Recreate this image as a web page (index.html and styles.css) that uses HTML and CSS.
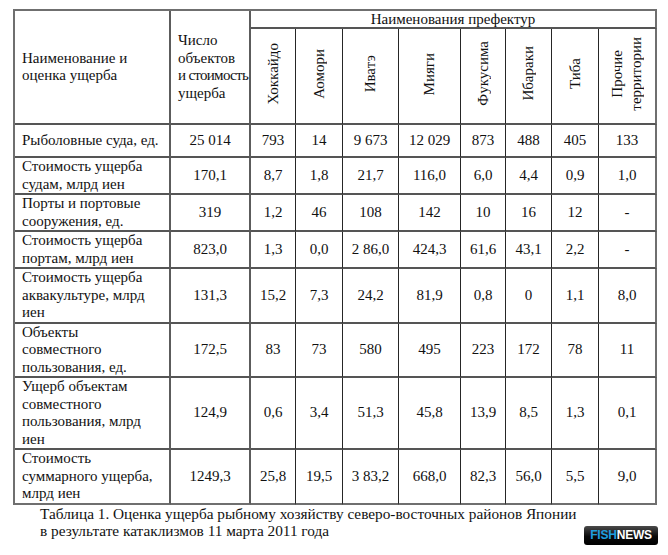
FILE: index.html
```html
<!DOCTYPE html>
<html lang="ru">
<head>
<meta charset="utf-8">
<link rel="stylesheet" href="styles.css">
</head>
<body>
<div class="page">
<table class="dmg">
<colgroup>
<col class="c1"><col class="c2"><col class="c3"><col class="c4"><col class="c5"><col class="c6"><col class="c7"><col class="c8"><col class="c9"><col class="c10">
</colgroup>
<thead>
<tr class="h-top">
<th rowspan="2" class="name thick">Наименование и<br>оценка ущерба</th>
<th rowspan="2" class="name thick">Число<br>объектов<br><span class="tight">и стоимость</span><br>ущерба</th>
<th colspan="8" class="group last">Наименования префектур</th>
</tr>
<tr class="h-rot">
<th><span class="vert">Хоккайдо</span></th>
<th><span class="vert">Аомори</span></th>
<th><span class="vert">Иватэ</span></th>
<th><span class="vert">Мияги</span></th>
<th><span class="vert">Фукусима</span></th>
<th><span class="vert">Ибараки</span></th>
<th><span class="vert">Тиба</span></th>
<th class="last"><span class="vert">Прочие<br>территории</span></th>
</tr>
</thead>
<tbody>
<tr class="r33"><td class="name thick">Рыболовные суда, ед.</td><td class="thick">25 014</td><td>793</td><td>14</td><td>9 673</td><td>12 029</td><td>873</td><td>488</td><td>405</td><td class="last">133</td></tr>
<tr class="r36"><td class="name thick">Стоимость ущерба<br>судам, млрд иен</td><td class="thick">170,1</td><td>8,7</td><td>1,8</td><td>21,7</td><td>116,0</td><td>6,0</td><td>4,4</td><td>0,9</td><td class="last">1,0</td></tr>
<tr class="r36"><td class="name thick">Порты и портовые<br>сооружения, ед.</td><td class="thick">319</td><td>1,2</td><td>46</td><td>108</td><td>142</td><td>10</td><td>16</td><td>12</td><td class="last">-</td></tr>
<tr class="r35"><td class="name thick">Стоимость ущерба<br>портам, млрд иен</td><td class="thick">823,0</td><td>1,3</td><td>0,0</td><td>2 86,0</td><td>424,3</td><td>61,6</td><td>43,1</td><td>2,2</td><td class="last">-</td></tr>
<tr class="r54"><td class="name thick">Стоимость ущерба<br>аквакультуре, млрд<br>иен</td><td class="thick">131,3</td><td>15,2</td><td>7,3</td><td>24,2</td><td>81,9</td><td>0,8</td><td>0</td><td>1,1</td><td class="last">8,0</td></tr>
<tr class="r53"><td class="name thick">Объекты<br>совместного<br>пользования, ед.</td><td class="thick">172,5</td><td>83</td><td>73</td><td>580</td><td>495</td><td>223</td><td>172</td><td>78</td><td class="last">11</td></tr>
<tr class="r71"><td class="name thick">Ущерб объектам<br>совместного<br>пользования, млрд<br>иен</td><td class="thick">124,9</td><td>0,6</td><td>3,4</td><td>51,3</td><td>45,8</td><td>13,9</td><td>8,5</td><td>1,3</td><td class="last">0,1</td></tr>
<tr class="r53 bottom"><td class="name thick">Стоимость<br>суммарного ущерба,<br>млрд иен</td><td class="thick">1249,3</td><td>25,8</td><td>19,5</td><td>3 83,2</td><td>668,0</td><td>82,3</td><td>56,0</td><td>5,5</td><td class="last">9,0</td></tr>
</tbody>
</table>
<p class="caption">Таблица 1. Оценка ущерба рыбному хозяйству северо-восточных районов Японии<br>в результате катаклизмов 11 марта 2011 года</p>
<div class="logo"><span class="fish">FISH</span><span class="news">NEWS</span></div>
</div>
</body>
</html>
```

FILE: styles.css
```css
html, body {
  margin: 0;
  padding: 0;
  background: #ffffff;
}

.page {
  position: relative;
  width: 668px;
  height: 555px;
  overflow: hidden;
  font-family: "Liberation Serif", "Times New Roman", serif;
  font-size: 15px;
  color: #111;
}

.dmg {
  margin: 9px 0 0 13px;
  width: 644px;
  table-layout: fixed;
  border-collapse: separate;
  border-spacing: 0;
  border-top: 2px solid #6f6f6f;
  border-left: 2px solid #6f6f6f;
}

.c1 { width: 156px; }
.c2 { width: 80px; }
.c3 { width: 45px; }
.c4 { width: 47px; }
.c5 { width: 56px; }
.c6 { width: 62px; }
.c7 { width: 45px; }
.c8 { width: 46px; }
.c9 { width: 47px; }
.c10 { width: 58px; }

.dmg th,
.dmg td {
  box-sizing: border-box;
  padding: 0;
  font-weight: normal;
  text-align: center;
  vertical-align: middle;
  line-height: 17.5px;
  border-right: 1px solid #262626;
  border-bottom: 2px solid #555;
}

.dmg .thick {
  border-right: 2px solid #5c5c5c;
}

.dmg .last {
  border-right: 2px solid #6f6f6f;
}

.dmg .bottom td {
  border-bottom: 2px solid #6f6f6f;
}

.dmg .name {
  text-align: left;
  padding-left: 7px;
}

.tight {
  letter-spacing: -0.7px;
}

.h-top { height: 18px; }
.h-top .group { line-height: 16px; }
.h-rot { height: 96px; }

.vert {
  display: inline-block;
  writing-mode: vertical-rl;
  transform: rotate(180deg);
  line-height: 19px;
  text-align: center;
}

.r33 { height: 33px; }
.r35 { height: 35px; }
.r36 { height: 36px; }
.r53 { height: 53px; }
.r54 { height: 54px; }
.r71 { height: 71px; }

.caption {
  margin: 0 0 0 40px;
  line-height: 17.5px;
  font-size: 15.3px;
}

.logo {
  position: absolute;
  left: 584px;
  top: 526px;
  width: 74px;
  height: 19px;
  box-sizing: border-box;
  border-radius: 3px;
  background: linear-gradient(#4a4a4a, #0a0a0a 55%, #000);
  font-family: "Liberation Sans", Arial, sans-serif;
  font-weight: bold;
  font-size: 12px;
  line-height: 19px;
  text-align: center;
  letter-spacing: -0.2px;
}

.fish { color: #1e9ee0; }
.news { color: #ffffff; }
```
